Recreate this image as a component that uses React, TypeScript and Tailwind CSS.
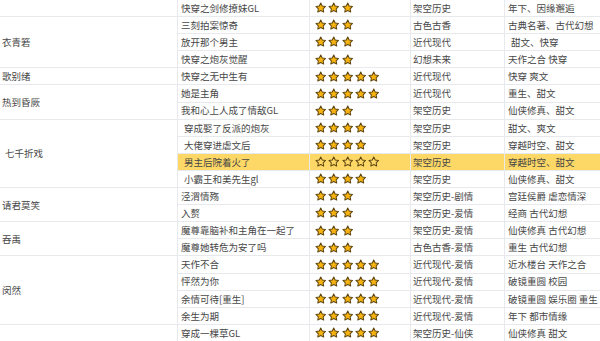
import React from "react";

type Row = {
  title: string;
  stars: number;
  category: string;
  tags: string;
  indent?: boolean;
  tagIndent?: boolean;
  active?: boolean;
};

type Group = { author: string; authorIndent?: boolean; rows: Row[] };

const groups: Group[] = [
  { author: "", rows: [{ title: "快穿之剑修撩妹GL", stars: 3, category: "架空历史", tags: "年下、因缘邂逅" }] },
  {
    author: "衣青箬",
    rows: [
      { title: "三刻拍案惊奇", stars: 3, category: "古色古香", tags: "古典名著、古代幻想" },
      { title: "放开那个男主", stars: 3, category: "近代现代", tags: "甜文、快穿", tagIndent: true },
      { title: "快穿之炮灰觉醒", stars: 3, category: "幻想未来", tags: "天作之合 快穿" },
    ],
  },
  { author: "歌别绪", rows: [{ title: "快穿之无中生有", stars: 5, category: "近代现代", tags: "快穿 爽文" }] },
  {
    author: "热到昏厥",
    rows: [
      { title: "她是主角", stars: 5, category: "近代现代", tags: "重生、甜文" },
      { title: "我和心上人成了情敌GL", stars: 3, category: "架空历史", tags: "仙侠修真、甜文" },
    ],
  },
  {
    author: "七千折戏",
    authorIndent: true,
    rows: [
      { title: "穿成娶了反派的炮灰", stars: 4, category: "架空历史", tags: "甜文、爽文", indent: true },
      { title: "大佬穿进虐文后", stars: 4, category: "架空历史", tags: "穿越时空、甜文", indent: true },
      { title: "男主后院着火了", stars: 5, category: "架空历史", tags: "穿越时空、甜文", indent: true, active: true },
      { title: "小霸王和美先生gl", stars: 4, category: "架空历史", tags: "仙侠修真、甜文", indent: true },
    ],
  },
  {
    author: "请君莫笑",
    rows: [
      { title: "泾渭情殇", stars: 3, category: "架空历史-剧情", tags: "宫廷侯爵 虐恋情深" },
      { title: "入赘", stars: 3, category: "架空历史-爱情", tags: "经商 古代幻想" },
    ],
  },
  {
    author: "吞禹",
    rows: [
      { title: "魔尊靠脑补和主角在一起了", stars: 3, category: "架空历史-爱情", tags: "仙侠修真 古代幻想" },
      { title: "魔尊她转危为安了吗", stars: 3, category: "古色古香-爱情", tags: "重生 古代幻想" },
    ],
  },
  {
    author: "闵然",
    rows: [
      { title: "天作不合", stars: 5, category: "近代现代-爱情", tags: "近水楼台 天作之合" },
      { title: "怦然为你", stars: 5, category: "近代现代-爱情", tags: "破镜重圆 校园" },
      { title: "余情可待[重生]", stars: 5, category: "近代现代-爱情", tags: "破镜重圆 娱乐圈 重生" },
      { title: "余生为期", stars: 5, category: "近代现代-爱情", tags: "年下 都市情缘" },
    ],
  },
  { author: "", rows: [{ title: "穿成一棵草GL", stars: 5, category: "架空历史-仙侠", tags: "仙侠修真 甜文" }] },
];

const spanClass: Record<number, string> = {
  1: "row-span-1",
  2: "row-span-2",
  3: "row-span-3",
  4: "row-span-4",
};

function Star({ hollow }: { hollow?: boolean }) {
  return (
    <svg viewBox="0 0 24 24" className="h-[11.5px] w-[11.5px] shrink-0">
      <polygon
        points="12,2 15.09,8.26 22,9.27 17,14.14 18.18,21.02 12,17.77 5.82,21.02 7,14.14 2,9.27 8.91,8.26"
        fill={hollow ? "#fdd866" : "#f6b30f"}
        stroke="#5e4510"
        strokeWidth={2.1}
        strokeLinejoin="round"
      />
    </svg>
  );
}

export default function App() {
  const cell = "flex items-center border-b border-r border-[#e7e9ed] whitespace-nowrap overflow-hidden";

  return (
    <div
      className="h-[341px] w-[600px] overflow-hidden bg-white text-[9.5px] text-[#474747]"
      style={{ fontFamily: '"Noto Sans CJK SC", "Noto Sans", sans-serif' }}
    >
      <div className="grid w-[700px] grid-cols-[178px_132px_101px_94px_195px] auto-rows-[17.1px]">
        {groups.map((g, gi) => (
          <React.Fragment key={gi}>
            {g.rows.map((r, ri) => {
              const bg = r.active ? "bg-[#fdd866]" : "bg-white";
              return (
                <React.Fragment key={ri}>
                  {ri === 0 && (
                    <div
                      className={`${cell} ${spanClass[g.rows.length]} ${
                        g.authorIndent ? "pl-[5px]" : "pl-[2px]"
                      } bg-white`}
                    >
                      {g.author}
                    </div>
                  )}
                  <div className={`${cell} ${bg} ${r.indent ? "pl-[6px]" : "pl-[3px]"}`}>{r.title}</div>
                  <div className={`${cell} ${bg} gap-[1.8px] pl-[5px]`}>
                    {Array.from({ length: r.stars }).map((_, i) => (
                      <Star key={i} hollow={r.active} />
                    ))}
                  </div>
                  <div className={`${cell} ${bg} pl-[2px]`}>{r.category}</div>
                  <div className={`${cell} ${bg} ${r.tagIndent ? "pl-[6px]" : "pl-[3px]"}`}>{r.tags}</div>
                </React.Fragment>
              );
            })}
          </React.Fragment>
        ))}
      </div>
    </div>
  );
}
